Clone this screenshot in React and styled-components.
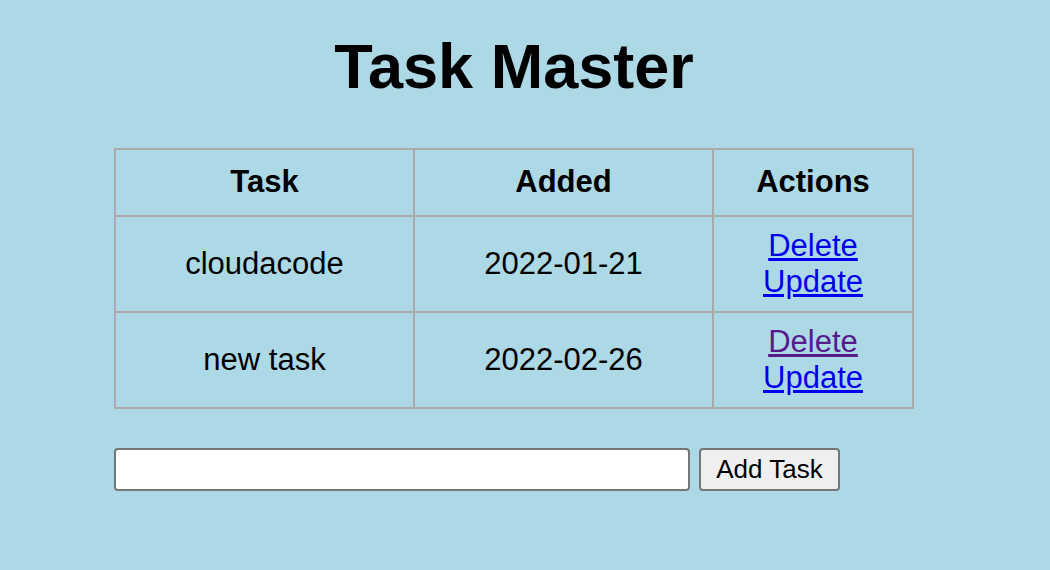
import React from 'react';
import styled, { createGlobalStyle } from 'styled-components';

const GlobalStyle = createGlobalStyle`
  body {
    margin: 0;
    background-color: #add8e6;
    font-family: "Liberation Sans", Arial, Helvetica, sans-serif;
  }
`;

const tasks = [
  { id: 1, content: 'cloudacode', added: '2022-01-21', visited: false },
  { id: 2, content: 'new task', added: '2022-02-26', visited: true },
];

const App = () => {
  return (
    <>
      <GlobalStyle />
      <Content>
        <Title>Task Master</Title>
        <TaskTable>
          <colgroup>
            <col style={{ width: 299 }} />
            <col style={{ width: 299 }} />
            <col style={{ width: 200 }} />
          </colgroup>
          <thead>
            <tr>
              <HeadCell>Task</HeadCell>
              <HeadCell>Added</HeadCell>
              <HeadCell>Actions</HeadCell>
            </tr>
          </thead>
          <tbody>
            {tasks.map((task) => (
              <tr key={task.id}>
                <Cell>{task.content}</Cell>
                <Cell>{task.added}</Cell>
                <Cell>
                  <ActionLink href="#" $visited={task.visited}>Delete</ActionLink>
                  <br />
                  <ActionLink href="#">Update</ActionLink>
                </Cell>
              </tr>
            ))}
          </tbody>
        </TaskTable>
        <AddForm onSubmit={(e) => e.preventDefault()}>
          <TaskInput type="text" name="content" />
          <AddButton type="submit">Add Task</AddButton>
        </AddForm>
      </Content>
    </>
  );
};

export default App;

const Content = styled.div`
  width: 800px;
  margin: 0 0 0 114px;
`;

const Title = styled.h1`
  font-size: 63px;
  font-weight: bold;
  text-align: center;
  margin: 30px 0 46px;
`;

const TaskTable = styled.table`
  width: 798px;
  border-collapse: collapse;
  border: 2px solid #aaa;
  table-layout: fixed;
`;

const HeadCell = styled.th`
  font-size: 31px;
  font-weight: bold;
  text-align: center;
  border: 2px solid #aaa;
  padding: 14px 8px 15px;
`;

const Cell = styled.td`
  font-size: 31px;
  text-align: center;
  border: 2px solid #aaa;
  padding: 11px 8px;
`;

const ActionLink = styled.a`
  color: ${(p) => (p.$visited ? '#551a8b' : '#0000ee')};
  text-decoration: underline;
`;

const AddForm = styled.form`
  display: flex;
  align-items: center;
  gap: 9px;
  margin-top: 39px;
`;

const TaskInput = styled.input`
  box-sizing: border-box;
  width: 576px;
  height: 43px;
  border: 2px solid #767676;
  border-radius: 4px;
  background: #fff;
  font-size: 26px;
  padding: 2px 6px;
`;

const AddButton = styled.button`
  box-sizing: border-box;
  height: 43px;
  width: 141px;
  border: 2px solid #767676;
  border-radius: 4px;
  background: #efefef;
  font-family: "Liberation Sans", Arial, sans-serif;
  font-size: 26px;
  color: #000;
  padding: 0 8px;
`;
